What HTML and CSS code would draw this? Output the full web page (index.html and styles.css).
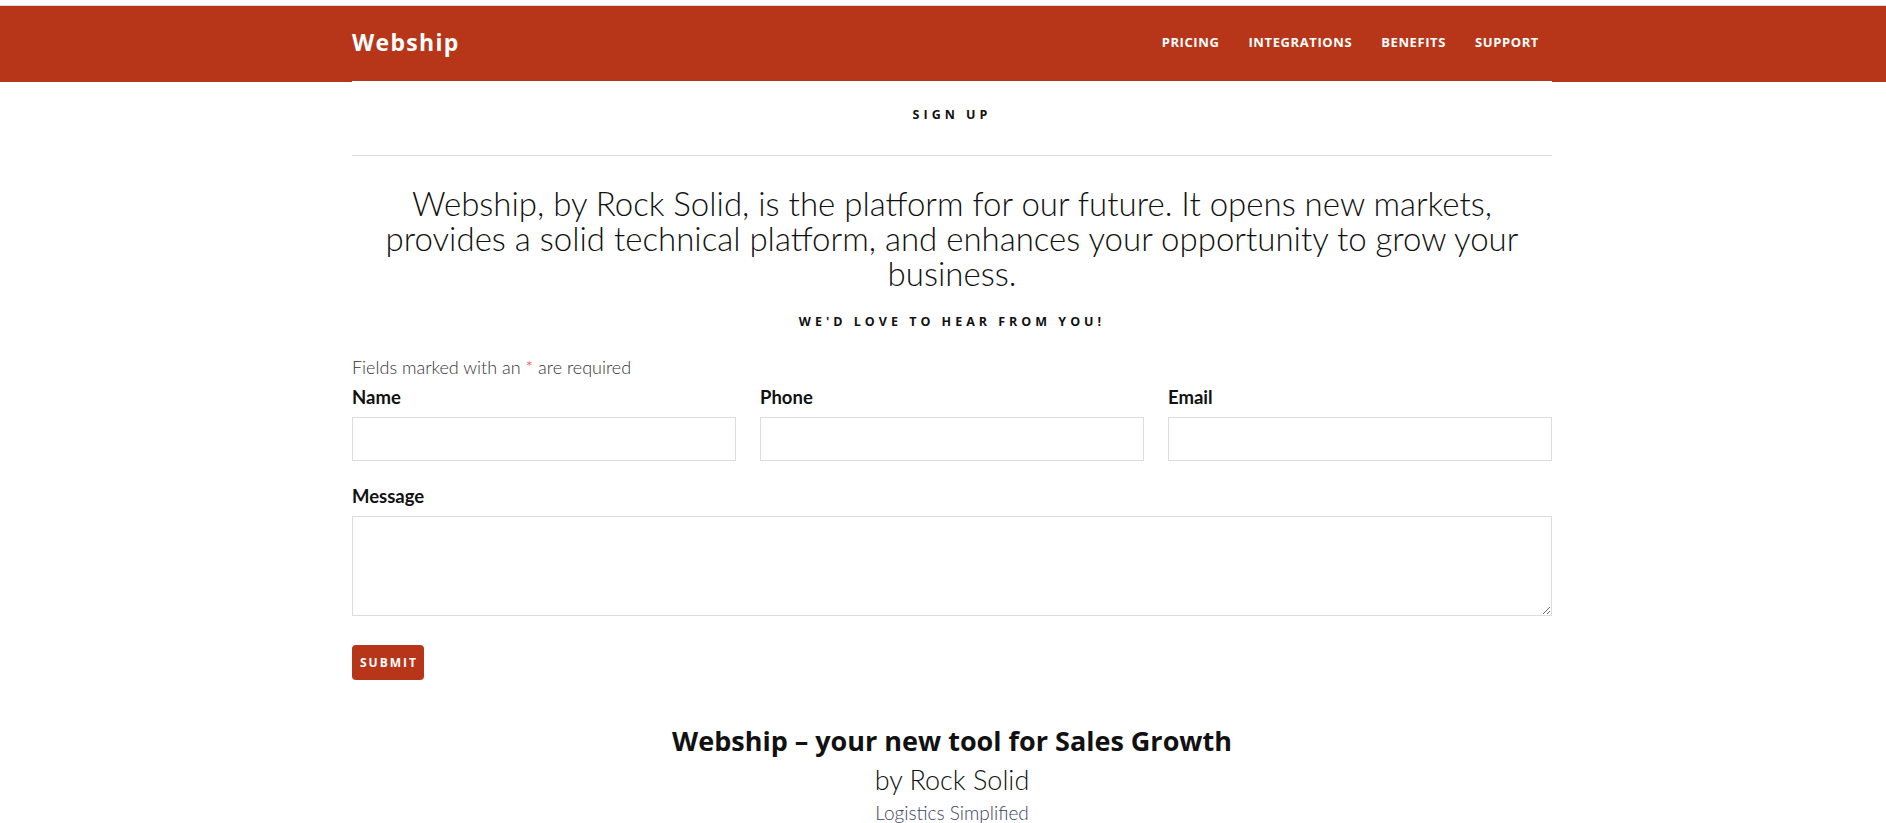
FILE: index.html
```html
<!DOCTYPE html>
<html lang="en">
<head>
<meta charset="utf-8">
<title>Webship – Sign Up</title>
<link rel="stylesheet" href="styles.css">
</head>
<body>
<div class="topline"></div>
<header class="site-header">
  <div class="wrap header-inner">
    <a class="brand" href="#">Webship</a>
    <nav class="nav">
      <a href="#">Pricing</a>
      <a href="#">Integrations</a>
      <a href="#">Benefits</a>
      <a href="#">Support</a>
    </nav>
  </div>
</header>
<main class="wrap page">
  <h1 class="page-title">Sign Up</h1>
  <hr class="rule">
  <p class="lead">Webship, by Rock Solid, is the platform for our future. It opens new markets,<br>provides a solid technical platform, and enhances your opportunity to grow your<br>business.</p>
  <h2 class="section-title">We'd love to hear from you!</h2>
  <form class="form">
    <p class="note">Fields marked with an <span class="req">*</span> are required</p>
    <div class="row3">
      <div class="field"><label for="f-name">Name</label><input id="f-name" type="text"></div>
      <div class="field"><label for="f-phone">Phone</label><input id="f-phone" type="text"></div>
      <div class="field"><label for="f-email">Email</label><input id="f-email" type="text"></div>
    </div>
    <div class="field field-msg"><label for="f-msg">Message</label><textarea id="f-msg"></textarea></div>
    <div class="actions"><button class="btn" type="button">Submit</button></div>
  </form>
  <section class="outro">
    <h2 class="outro-title">Webship – your new tool for Sales Growth</h2>
    <p class="outro-by">by Rock Solid</p>
    <p class="outro-tag">Logistics Simplified</p>
  </section>
</main>
</body>
</html>
```
FILE: styles.css
```css
* { box-sizing: border-box; }
html, body { margin: 0; padding: 0; background: #fff; }
body { font-family: Lato, "Open Sans", sans-serif; color: #111; }

.wrap {
  width: 1200px;
  margin-left: calc(50% - 591px);
}

.topline {
  height: 6px;
  border-bottom: 1px solid #dcdcdc;
}

.site-header {
  background: #b73619;
  height: 76px;
}
.header-inner {
  height: 76px;
  display: flex;
  align-items: center;
  justify-content: space-between;
  padding-bottom: 5px;
}
.brand {
  font-family: "Open Sans", sans-serif;
  font-weight: 700;
  font-size: 23px;
  letter-spacing: 1.3px;
  color: #fff;
  text-decoration: none;
}
.nav { display: flex; }
.nav a {
  font-family: "Open Sans", sans-serif;
  font-weight: 700;
  font-size: 13px;
  letter-spacing: 0.6px;
  text-transform: uppercase;
  color: #fff;
  text-decoration: none;
  padding: 0 14.5px;
}
.nav a:last-child { padding-right: 13px; }

.page {
  background: #fff;
  margin-top: -1px;
  position: relative;
}

.page-title {
  margin: 0;
  padding: 24px 0 30px;
  font-family: "Open Sans", sans-serif;
  font-weight: 700;
  font-size: 12.5px;
  line-height: 20px;
  letter-spacing: 4px;
  text-transform: uppercase;
  text-align: center;
  color: #111;
}
.rule {
  margin: 0;
  border: 0;
  border-top: 1px solid #dddddd;
}

.lead {
  margin: 30px 0 0;
  font-weight: 300;
  font-size: 33px;
  line-height: 35px;
  text-align: center;
  color: #111;
  white-space: nowrap;
}

.section-title {
  margin: 21px 0 0;
  font-family: "Open Sans", sans-serif;
  font-weight: 700;
  font-size: 12.5px;
  line-height: 20px;
  letter-spacing: 4px;
  text-transform: uppercase;
  text-align: center;
  color: #111;
}

.form { margin-top: 23px; }
.note {
  margin: 0;
  font-weight: 300;
  font-size: 18px;
  line-height: 24px;
  color: #333;
}
.req { color: #e8453c; }

.row3 {
  margin-top: 6px;
  display: grid;
  grid-template-columns: repeat(3, 1fr);
  gap: 24px;
}
.field { display: flex; flex-direction: column; }
.field label {
  font-weight: 700;
  font-size: 18.5px;
  line-height: 24px;
  color: #111;
  margin-bottom: 8px;
}
.field input {
  height: 44px;
  border: 1px solid #dddddd;
  border-radius: 0;
  padding: 0 10px;
  font: inherit;
  background: #fff;
}
.field-msg { margin-top: 23px; }
.field textarea {
  height: 100px;
  border: 1px solid #dddddd;
  border-radius: 0;
  padding: 8px 10px;
  font: inherit;
  background: #fff;
}

.actions { margin-top: 29px; display: flex; }
.btn {
  height: 35px;
  width: 72px;
  padding: 0 0 0 2px;
  border: 0;
  border-radius: 4px;
  background: #b73619;
  color: #fff;
  font-family: "Open Sans", sans-serif;
  font-weight: 700;
  font-size: 12px;
  letter-spacing: 2px;
  text-transform: uppercase;
  cursor: pointer;
}

.outro { margin-top: 45px; text-align: center; }
.outro-title {
  margin: 0;
  font-family: "Open Sans", sans-serif;
  font-weight: 700;
  font-size: 27px;
  line-height: 32px;
  color: #111;
}
.outro-by {
  margin: 7px 0 0;
  font-weight: 300;
  font-size: 27px;
  line-height: 32px;
  color: #111;
}
.outro-tag {
  margin: 4px 0 0;
  font-weight: 300;
  font-size: 19px;
  line-height: 26px;
  color: #3b4460;
}
```
